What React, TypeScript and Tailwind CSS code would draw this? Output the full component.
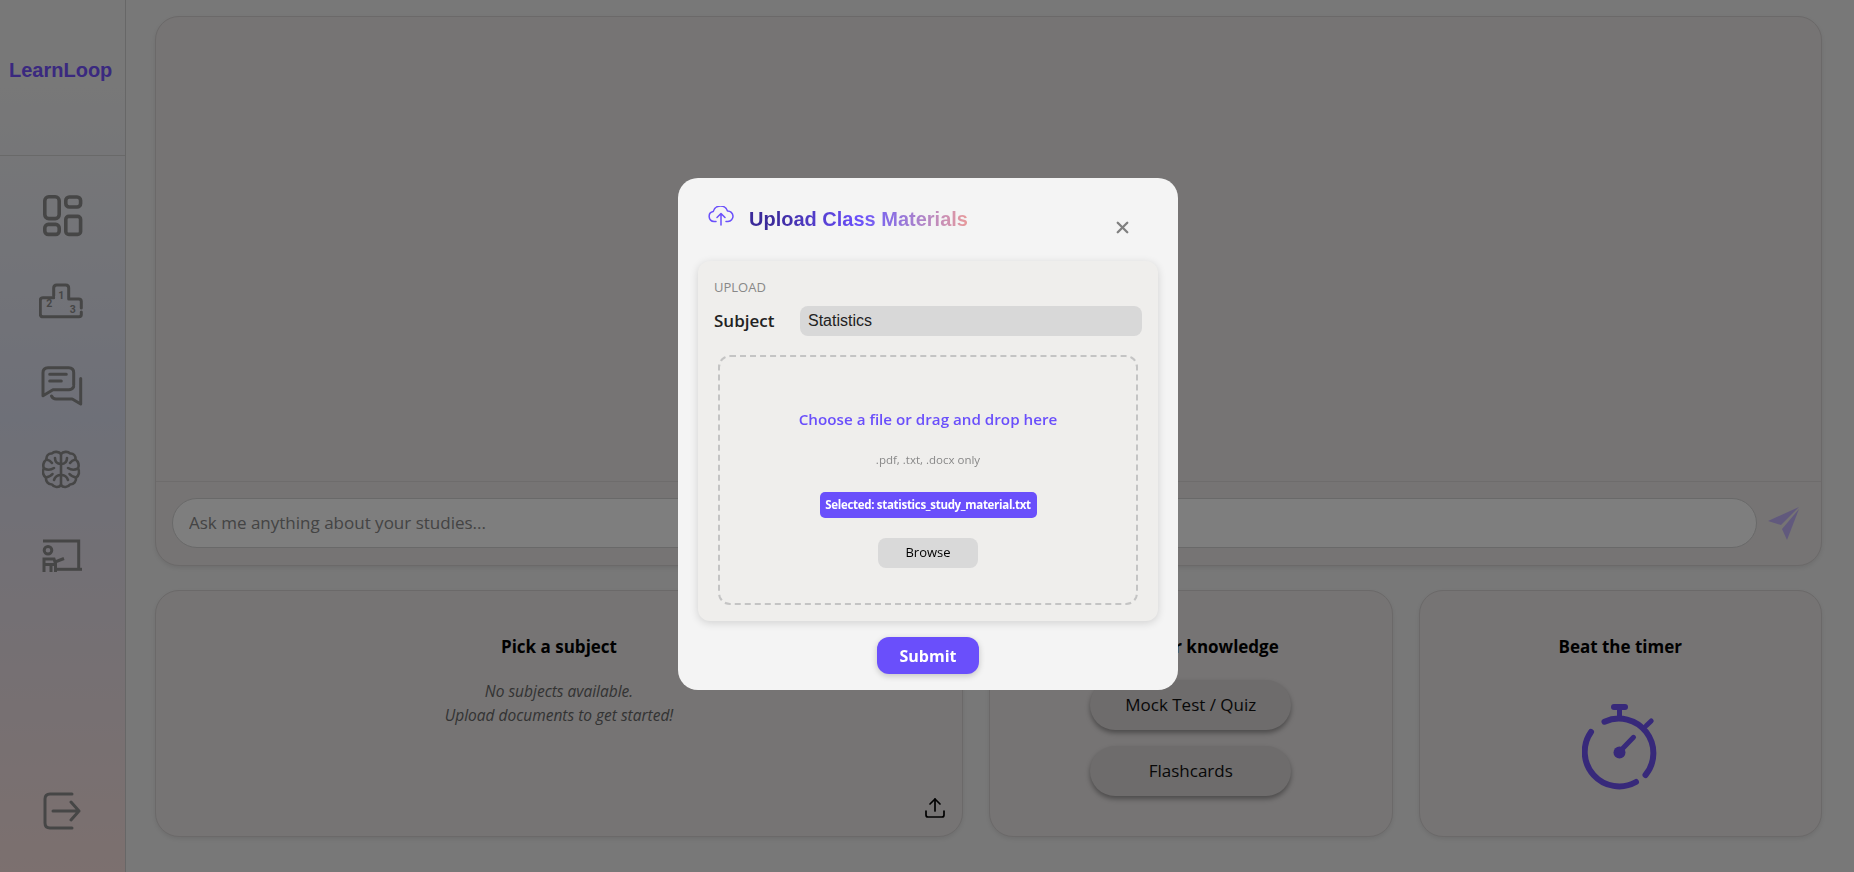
import React from 'react';
import { Upload, X } from 'lucide-react';

const NAV_STROKE = '#8c8c8c';

const DashboardIcon = () => (
  <svg width="42" height="43" viewBox="0 0 42 43" fill="none" stroke={NAV_STROKE} strokeWidth="3.6">
    <rect x="2.800" y="2.800" width="14.400" height="21.800" rx="4" />
    <rect x="23.800" y="3" width="14.800" height="10" rx="3.500" />
    <rect x="2.800" y="30.400" width="14.400" height="10" rx="3.500" />
    <rect x="23.800" y="22.400" width="14.800" height="18" rx="3" />
  </svg>
);

const PodiumIcon = () => (
  <svg width="47" height="36" viewBox="0 0 47 36" fill="none" stroke={NAV_STROKE} strokeWidth="3" strokeLinecap="round" strokeLinejoin="round">
    <path d="M14.700 12.700V5q0-3 3-3h9q3 0 3 3v11h10q2.600 0 2.600 2.600V25" />
    <path d="M14.700 14.700H4q-2.700 0-2.700 2.700V31q0 2.700 2.700 2.700H40q2.300 0 2.300-2.300V29" />
    <text x="22.300" y="15.500" textAnchor="middle" fontSize="10.500" fontWeight="700" fill={NAV_STROKE} stroke="none" fontFamily="Roboto, sans-serif">1</text>
    <text x="10.300" y="24" textAnchor="middle" fontSize="10.500" fontWeight="700" fill={NAV_STROKE} stroke="none" fontFamily="Roboto, sans-serif">2</text>
    <text x="33.700" y="30" textAnchor="middle" fontSize="10.500" fontWeight="700" fill={NAV_STROKE} stroke="none" fontFamily="Roboto, sans-serif">3</text>
  </svg>
);

const ChatIcon = () => (
  <svg width="44" height="44" viewBox="0 0 44 44" fill="none" stroke={NAV_STROKE} strokeWidth="3" strokeLinecap="round" strokeLinejoin="round">
    <path d="M32.700 20V7.700q0-5-5-5H7q-5 0-5 5v23l10-6h16q3 0 4.700-3" />
    <path d="M8.700 9.300h16.600M8.700 16h11.600" />
    <path d="M39.700 13.500V39l-8.500-5H15q-3 0-4.500-3" />
  </svg>
);

const BrainIcon = () => (
  <svg width="41" height="40" viewBox="0 0 41 40" fill="none" stroke={NAV_STROKE} strokeWidth="2.600" strokeLinecap="round" strokeLinejoin="round">
    <path d="M19 4C17 1.500 12 1 10 3.500 6.500 3 4 6 4.500 9.500 1.500 11.500.5 15.500 2 18.500 0 21 1 26 4 27.500 3.500 31 6 34.500 10 34.500 12 37.500 17 38 19 35V4" />
    <path d="M19 4C21 1.500 26 1 28 3.500 31.500 3 34 6 33.500 9.500 36.500 11.500 37.500 15.500 36 18.500 38 21 37 26 34 27.500 34.500 31 32 34.500 28 34.500 26 37.500 21 38 19 35" />
    <path d="M19 14C15 14 13 12 13 8M4.500 9.500C7 10 9 11.500 10 13M2 18.500C5 20 9 20 12 18M19 25C15 25 13 27 12 30M4 27.500C6 27 9 26 10.500 24" />
    <path d="M19 14C23 14 25 12 25 8M33.500 9.500C31 10 29 11.500 28 13M36 18.500C33 20 29 20 26 18M19 25C23 25 25 27 26 30M34 27.500C32 27 29 26 27.500 24" />
  </svg>
);

const TeacherIcon = () => (
  <svg width="42" height="34" viewBox="0 0 42 34" fill="none" stroke={NAV_STROKE} strokeWidth="3">
    <path d="M1 2h35.700v28.300" />
    <path d="M15 30.300h25" />
    <circle cx="6" cy="11.300" r="3.800" />
    <path d="M2 33V20h10l1 3 9-3.500" />
    <path d="M2 25.500h13M9 33v-7.500M13.500 33v-7.500" />
  </svg>
);

const LogoutIcon = () => (
  <svg width="38" height="38" viewBox="0 0 38 38" fill="none" stroke={NAV_STROKE} strokeWidth="3" strokeLinecap="round" strokeLinejoin="round">
    <path d="M29 2H7q-5 0-5 5v24q0 5 5 5h22" />
    <path d="M10 19h26M28 10l8 9-8 9" />
  </svg>
);

const TimerIcon = () => (
  <svg width="76" height="86" viewBox="0 0 76 86" fill="none" stroke="#6f52f5" strokeWidth="6" strokeLinecap="round">
    <path d="M32 3h11" />
    <path d="M37.500 3v11" strokeWidth="5" />
    <path d="M54 78A34.500 34.500 0 0 1 9 28" />
    <path d="M22.500 17.700A34.500 34.500 0 0 1 63.500 71" />
    <path d="M64.200 21.700L69.200 17" strokeWidth="5" />
    <path d="M37.500 47.700L51.500 33.300" strokeWidth="5" />
    <circle cx="37.500" cy="48.500" r="6" fill="#6f52f5" stroke="none" />
  </svg>
);

const SendIcon = () => (
  <svg width="32" height="34" viewBox="0 0 32 34" fill="#c2b2fa">
    <path d="M0 14L31 0 13 18Z" />
    <path d="M31 2L19 33 14 22Z" />
  </svg>
);

const CloudIcon = () => (
  <svg width="26" height="20" viewBox="0 0 26 20" fill="none" stroke="#6a4ffb" strokeWidth="1.500" strokeLinecap="round" strokeLinejoin="round">
    <path d="M8 15.500H6a5 5 0 0 1-.8-9.900A7.500 7.500 0 0 1 19.500 5 5.200 5.200 0 0 1 20 15.500H18" />
    <path d="M13 19V8M9 11.500l4-4 4 4" />
  </svg>
);

const SIDE_ICONS = [
  { key: 'dashboard', icon: <DashboardIcon />, mt: 'mt-[38px]' },
  { key: 'podium', icon: <PodiumIcon />, mt: 'mt-[46px]' },
  { key: 'chat', icon: <ChatIcon />, mt: 'mt-[46px]' },
  { key: 'brain', icon: <BrainIcon />, mt: 'mt-[41px]' },
  { key: 'teacher', icon: <TeacherIcon />, mt: 'mt-[49px]' },
];

const Sidebar = () => (
  <aside className="w-[126px] shrink-0 h-full flex flex-col border-r border-[#cfcfcf] bg-gradient-to-b from-[#f0f0f0] from-10% via-[#dde0f0] via-48% to-[#f8e0de]">
    <div className="h-[156px] shrink-0 border-b border-[#d2d2d2] pt-[56px] pl-[9px]">
      <div className="font-['Liberation_Sans'] font-bold text-[20px] leading-[28px] text-[#7452ff]">LearnLoop</div>
    </div>
    {SIDE_ICONS.map(s => (
      <div key={s.key} className={`${s.mt} flex justify-center [&>svg]:block`}>{s.icon}</div>
    ))}
    <div className="mt-auto mb-[42px] pr-[2px] flex justify-center"><LogoutIcon /></div>
  </aside>
);

const Card = ({ title, children }: { title: string; children: React.ReactNode }) => (
  <div className="relative h-[247px] rounded-[24px] border border-[#d6d2d2] bg-[#ece8e8] shadow-[0_2px_4px_rgba(0,0,0,0.08)] flex flex-col items-center pt-[44px]">
    <h3 className="font-bold text-[17px] leading-[24px] text-black">{title}</h3>
    {children}
  </div>
);

const UploadModal = () => (
  <div className="fixed inset-0 bg-black/50 flex items-center justify-center pb-[4px] pl-[2px]">
    <div className="w-[500px] h-[512px] rounded-[20px] bg-[#f4f4f4] px-[20px] flex flex-col">
      <div className="relative h-[83px] shrink-0">
        <div className="flex items-start pt-[28px] pl-[10px]">
          <CloudIcon />
          <span className="ml-[15px] font-['Liberation_Sans'] font-bold text-[20px] leading-[26px] bg-gradient-to-r from-[#3b2a9a] from-10% via-[#6a4ffb] via-50% to-[#e89a9a] bg-clip-text text-transparent">Upload Class Materials</span>
        </div>
        <X size={19} strokeWidth={3} className="absolute right-[26px] top-[40px] text-[#808080]" />
      </div>
      <div className="h-[360px] shrink-0 rounded-[12px] bg-[#efeeec] shadow-[0_2px_8px_rgba(0,0,0,0.14)] px-[16px] pt-[17px]">
        <div className="text-[13px] leading-[18px] text-[#888888]">UPLOAD</div>
        <div className="flex items-center mt-[10px] h-[30px]">
          <span className="w-[86px] text-[17px] font-semibold text-[#222222]">Subject</span>
          <input readOnly value="Statistics" className="flex-1 h-[30px] rounded-[8px] bg-[#d8d8d8] px-[8px] font-['Liberation_Sans'] text-[16px] text-[#222222] outline-none" />
        </div>
        <div className="mx-[4px] mt-[19px] h-[250px] rounded-[12px] border-2 border-dashed border-[#c4c4c4] flex flex-col items-center pt-[51px]">
          <div className="text-[15.2px] leading-[22px] font-semibold text-[#6a4ffb]">Choose a file or drag and drop here</div>
          <div className="mt-[22px] text-[11.5px] leading-[16px] text-[#888888]">.pdf, .txt, .docx only</div>
          <div className="mt-[24px] h-[26px] w-[217px] rounded-[5px] bg-[#6a4ffb] flex items-center justify-center whitespace-nowrap text-[11.5px] font-bold tracking-[-0.3px] text-white">Selected: statistics_study_material.txt</div>
          <button className="mt-[20px] w-[100px] h-[30px] rounded-[8px] bg-[#d9d9d9] text-[13px] text-black">Browse</button>
        </div>
      </div>
      <button className="mt-[16px] self-center w-[102px] h-[37px] rounded-[12px] bg-[#6a4ffb] text-[16px] font-bold text-white shadow-[0_2px_6px_rgba(0,0,0,0.2)]">Submit</button>
    </div>
  </div>
);

export default function App() {
  return (
    <div className="h-screen w-full flex overflow-hidden bg-[#f0f0f0] font-['Open_Sans',sans-serif]">
      <Sidebar />
      <main className="flex-1 min-w-0 pl-[29px] pr-[32px] pt-[16px] flex flex-col gap-[24px]">
        <section className="h-[550px] shrink-0 rounded-[24px] border border-[#d6d2d2] bg-[#ece8e8] shadow-[0_2px_4px_rgba(0,0,0,0.08)] flex flex-col">
          <div className="flex-1 border-b border-[#dcd8d8]" />
          <div className="h-[83px] shrink-0 flex items-start pt-[16px] pl-[16px] pr-[21px]">
            <input placeholder="Ask me anything about your studies..." className="flex-1 h-[50px] rounded-full border border-[#d2d2d2] bg-[#fcfcfc] pl-[16px] pr-[16px] pb-[2px] text-[17px] text-[#333333] placeholder:text-[#888888] outline-none" />
            <div className="ml-[11px] mt-[9px]"><SendIcon /></div>
          </div>
        </section>
        <section className="grid grid-cols-[808px_1fr_1fr] gap-[26px]">
          <Card title="Pick a subject">
            <p className="mt-[20px] text-center italic text-[15.5px] leading-[24px] text-[#666666]">No subjects available.<br />Upload documents to get started!</p>
            <Upload size={24} strokeWidth={1.7} className="absolute right-[15px] bottom-[16px] text-black" />
          </Card>
          <Card title="Test your knowledge">
            <button className="mt-[21px] w-[201px] h-[50px] rounded-[25px] bg-[#dcd8d8] shadow-[0_3px_5px_rgba(0,0,0,0.35)] text-[17px] text-[#111111]">Mock Test / Quiz</button>
            <button className="mt-[16px] w-[201px] h-[50px] rounded-[25px] bg-[#dcd8d8] shadow-[0_3px_5px_rgba(0,0,0,0.35)] text-[17px] text-[#111111]">Flashcards</button>
          </Card>
          <Card title="Beat the timer">
            <div className="mt-[45px]"><TimerIcon /></div>
          </Card>
        </section>
      </main>
      <UploadModal />
    </div>
  );
}
